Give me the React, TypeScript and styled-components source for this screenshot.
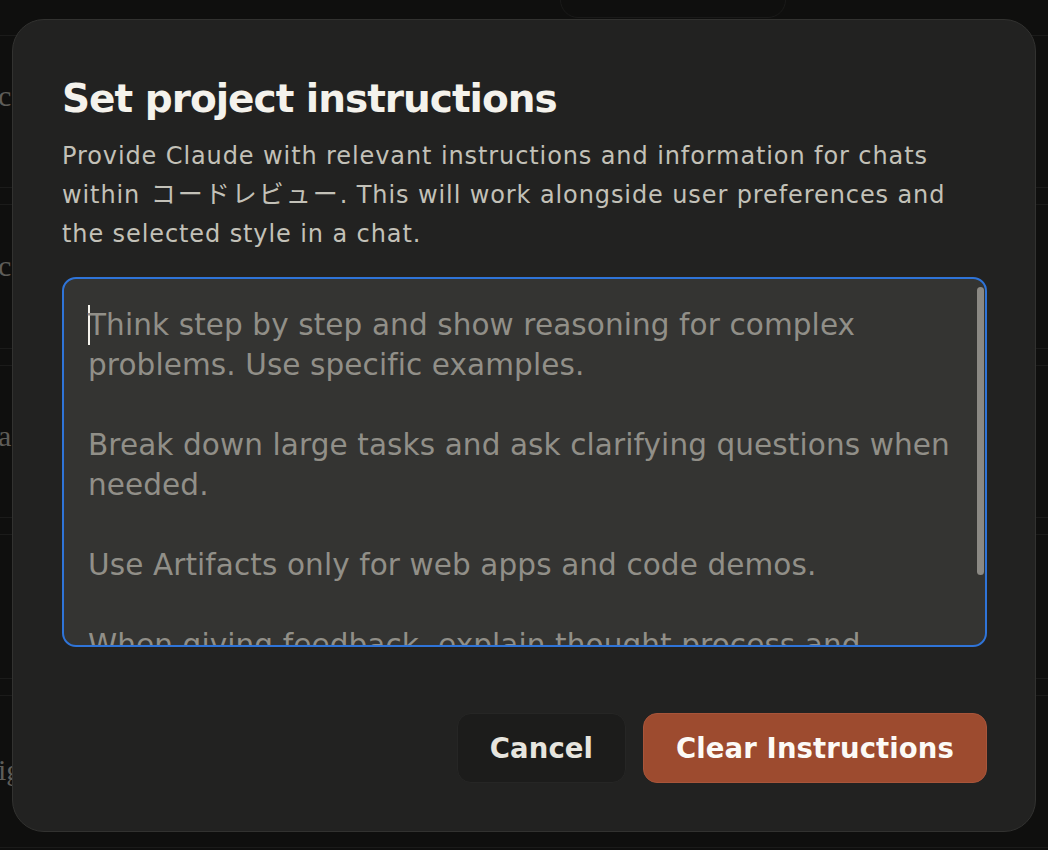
import React from "react";
import styled, { createGlobalStyle } from "styled-components";

const GlobalStyle = createGlobalStyle`
  html, body {
    margin: 0;
    padding: 0;
    background: #0f0f0e;
    width: 1048px;
    height: 850px;
    overflow: hidden;
  }
  * { box-sizing: border-box; }
`;

const Page = styled.div`
  position: relative;
  width: 1048px;
  height: 850px;
  overflow: hidden;
  background: #0f0f0e;
`;

const TopPill = styled.div`
  position: absolute;
  left: 560px;
  top: -30px;
  width: 226px;
  height: 48px;
  border: 1px solid #1a1a19;
  border-radius: 18px;
`;

const BgList = styled.div`
  display: flex;
  flex-direction: column;
  padding-top: 35px;
  gap: 16px;
`;

const BgCard = styled.div<{ $h: number; $top: number }>`
  height: ${(p) => p.$h}px;
  border-top: 1px solid #1b1b1a;
  border-bottom: 1px solid #1b1b1a;
  padding-top: ${(p) => p.$top}px;
  font-family: "Liberation Serif", "DejaVu Serif", serif;
  font-size: 30px;
  line-height: 34px;
  color: #5e5d59;
  margin-left: -2px;
`;

const Overlay = styled.div`
  position: absolute;
  left: 12px;
  top: 19px;
  width: 1024px;
  height: 813px;
  background: #222221;
  border: 1px solid #323230;
  border-radius: 32px;
  display: flex;
  flex-direction: column;
  padding: 56px 48px 48px 49px;
  font-family: "DejaVu Sans", "Noto Sans CJK JP", sans-serif;
`;

const Title = styled.h2`
  margin: 0;
  font-size: 39px;
  line-height: 46px;
  font-weight: 700;
  letter-spacing: -1px;
  color: #f4f2ec;
`;

const Description = styled.p`
  margin: 15px 0 0;
  font-size: 24px;
  line-height: 39px;
  font-weight: 400;
  letter-spacing: 0.9px;
  color: #c3c1b8;
`;

const Jp = styled.span`
  font-family: "Noto Sans CJK JP", sans-serif;
  font-size: 25px;
  line-height: 0;
  letter-spacing: 2px;
  font-weight: 400;
  margin-left: 2px;
`;

const EditorBox = styled.div`
  position: relative;
  margin-top: 23px;
  height: 370px;
  flex-shrink: 0;
  background: #343432;
  border: 2px solid #2f74d8;
  border-radius: 14px;
  overflow: hidden;
`;

const EditorText = styled.div`
  padding: 26px 20px 0 24px;
  font-size: 29.5px;
  line-height: 40px;
  letter-spacing: 0.1px;
  color: #918f88;
  white-space: pre-wrap;
`;

const Caret = styled.span`
  display: inline-block;
  width: 2px;
  height: 40px;
  margin-right: -2px;
  vertical-align: top;
  background: #f4f2ec;
`;

const ScrollThumb = styled.div`
  position: absolute;
  right: 1px;
  top: 8px;
  width: 7px;
  height: 288px;
  border-radius: 4px;
  background: #8b8984;
`;

const Actions = styled.div`
  margin-top: auto;
  display: flex;
  justify-content: flex-end;
  gap: 17px;
`;

const Button = styled.button<{ $primary?: boolean }>`
  height: 70px;
  padding: 0 32px;
  border-radius: 14px;
  border: 1px solid ${(p) => (p.$primary ? "#a8553a" : "#262625")};
  background: ${(p) => (p.$primary ? "#9d4b2f" : "#1c1c1b")};
  color: ${(p) => (p.$primary ? "#fcfaf6" : "#e7e5df")};
  font-family: "DejaVu Sans", sans-serif;
  font-size: 27.5px;
  letter-spacing: 0.1px;
  font-weight: 700;
  cursor: pointer;
`;

const bgRows = [
  { h: 153, top: 43, t: "c" },
  { h: 145, top: 44, t: "c" },
  { h: 153, top: 53, t: "a" },
  { h: 145, top: 44, t: "" },
  { h: 153, top: 57, t: "ig" },
];

const text = `Think step by step and show reasoning for complex problems. Use specific examples.

Break down large tasks and ask clarifying questions when needed.

Use Artifacts only for web apps and code demos.

When giving feedback, explain thought process and highlight issues and opportunities.`;

export default function App() {
  return (
    <Page>
      <GlobalStyle />
      <TopPill />
      <BgList>
        {bgRows.map((r, i) => (
          <BgCard key={i} $h={r.h} $top={r.top}>
            {r.t}
          </BgCard>
        ))}
      </BgList>
      <Overlay role="dialog">
        <Title>Set project instructions</Title>
        <Description>
          Provide Claude with relevant instructions and information for chats within{" "}
          <Jp>コードレビュー</Jp>. This will work alongside user preferences and the selected style
          in a chat.
        </Description>
        <EditorBox>
          <EditorText>
            <Caret />
            {text}
          </EditorText>
          <ScrollThumb />
        </EditorBox>
        <Actions>
          <Button>Cancel</Button>
          <Button $primary>Clear Instructions</Button>
        </Actions>
      </Overlay>
    </Page>
  );
}
